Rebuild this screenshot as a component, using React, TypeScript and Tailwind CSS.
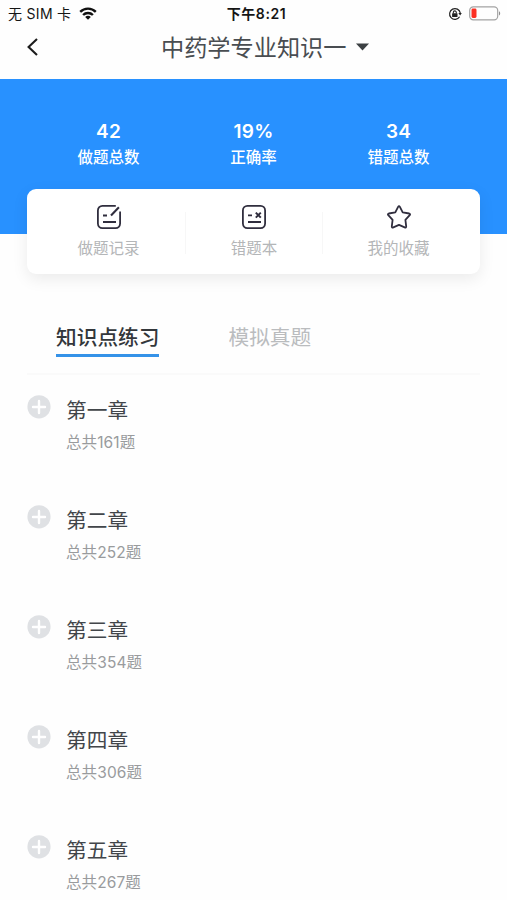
import type { ReactNode } from "react";

const stats = [
  { value: "42", label: "做题总数" },
  { value: "19%", label: "正确率" },
  { value: "34", label: "错题总数" },
];

const chapters = [
  { title: "第一章", total: 161 },
  { title: "第二章", total: 252 },
  { title: "第三章", total: 354 },
  { title: "第四章", total: 306 },
  { title: "第五章", total: 267 },
];

function WifiIcon() {
  return (
    <svg width="18" height="13" viewBox="0 0 18 13" fill="none" stroke="#111" strokeWidth="2.4">
      <path d="M1.2 4.9a11 11 0 0 1 15.6 0" />
      <path d="M4.1 8a6.9 6.9 0 0 1 9.8 0" />
      <path d="M9 12.8 6.2 10a3.9 3.9 0 0 1 5.6 0z" fill="#111" stroke="none" />
    </svg>
  );
}

function RotationLockIcon() {
  return (
    <svg width="14" height="14" viewBox="0 0 14 14" fill="none" stroke="#222">
      <path d="M11.6 9.8A5.4 5.4 0 1 1 12.3 6" strokeWidth="1.2" />
      <path d="M10.4 6h3.4l-1.7 2.4z" fill="#222" stroke="none" />
      <rect x="4.1" y="6.3" width="5.4" height="3.7" rx="0.5" fill="#222" stroke="none" />
      <path d="M5.3 6.5V5.4a1.5 1.5 0 0 1 3 0v1.1" strokeWidth="1.1" />
    </svg>
  );
}

function BatteryIcon() {
  return (
    <svg width="32" height="15" viewBox="0 0 32 15" fill="none">
      <rect x="0.7" y="0.8" width="28" height="13" rx="3.6" stroke="#a3a3a3" strokeWidth="1.2" />
      <rect x="2.5" y="2.6" width="5" height="9.4" rx="1.4" fill="#fb3024" />
      <path d="M30 5.2c1.6.7 1.6 3.6 0 4.3z" fill="#8f8f8f" />
    </svg>
  );
}

function RecordIcon() {
  return (
    <svg width="26" height="26" viewBox="0 0 26 26" fill="none" stroke="#302e3e" strokeWidth="1.8">
      <path d="M19.8 1.9H6.4a4.5 4.5 0 0 0-4.5 4.5v13.2a4.5 4.5 0 0 0 4.5 4.5h13.2a4.5 4.5 0 0 0 4.5-4.5V7.6" />
      <path d="m15 11.4 7.9-8.1" strokeWidth="2.1" />
      <path d="M7 11.5h4M7 18h13" />
    </svg>
  );
}

function MistakeIcon() {
  return (
    <svg width="26" height="26" viewBox="0 0 26 26" fill="none" stroke="#302e3e" strokeWidth="1.8">
      <rect x="1.9" y="1.9" width="22.2" height="22.2" rx="4.5" />
      <path d="M7 11.3h4M7 18h13" />
      <path d="m14.8 8.6 5 5m0-5-5 5" strokeWidth="2" />
    </svg>
  );
}

function StarIcon() {
  return (
    <svg
      width="26"
      height="26"
      viewBox="0 0 26 26"
      fill="none"
      stroke="#302e3e"
      strokeWidth="1.8"
      strokeLinejoin="round"
    >
      <path d="M12.1 2.9q.9-1.5 1.8 0l2.8 5.4 6.5 1.2q1.5.5.5 1.7l-4.3 4.7.8 6.5q0 1.6-1.5 1L13 20.9l-5.7 2.5q-1.5.6-1.5-1l.8-6.5-4.3-4.7q-1-1.2.5-1.7l6.5-1.2z" />
    </svg>
  );
}

function Action({ icon, label, className }: { icon: ReactNode; label: string; className: string }) {
  return (
    <div className={`flex flex-col items-center ${className}`}>
      {icon}
      <span className="mt-2 text-[15.5px] leading-[22px] text-[#b4b6b8]">{label}</span>
    </div>
  );
}

export default function App() {
  return (
    <div className="h-[900px] w-full overflow-hidden bg-[#fefefe] font-['Inter','Noto_Sans_CJK_SC',sans-serif]">
      <div className="grid h-[27px] grid-cols-3 items-center pr-[6px] pl-2 text-[14px] leading-5 text-[#151515]">
        <div className="flex items-center gap-2">
          <span className="tracking-[0.3px] whitespace-pre">无 SIM 卡</span>
          <WifiIcon />
        </div>
        <div className="pl-1 text-center font-semibold tracking-[0.6px]">下午8:21</div>
        <div className="flex items-center justify-end gap-[7px]">
          <RotationLockIcon />
          <BatteryIcon />
        </div>
      </div>

      <div className="flex h-[52px] items-start pt-[5px]">
        <svg className="mt-[5px] ml-[26px]" width="13" height="20" viewBox="0 0 13 20" fill="none">
          <path d="M11 2 2.6 10l8.4 8" stroke="#1c1c1c" strokeWidth="2.1" />
        </svg>
        <div className="ml-[122px] flex items-center text-[23.2px] leading-8 text-[#494d51]">
          中药学专业知识一
          <svg className="-mt-[2px] ml-[9px]" width="13" height="8" viewBox="0 0 13 8">
            <path d="M0 .5h13L6.5 7.5z" fill="#3c4043" />
          </svg>
        </div>
      </div>

      <div className="h-[155px] bg-[#2891ff] px-9 pt-10 text-white">
        <div className="grid grid-cols-3 text-center">
          {stats.map((s) => (
            <div key={s.label}>
              <div className="text-[19px] leading-[26px] font-semibold tracking-[0.2px]">{s.value}</div>
              <div className="text-[15.5px] leading-[25px] font-medium">{s.label}</div>
            </div>
          ))}
        </div>
      </div>

      <div className="relative mx-[27px] -mt-[45px] flex h-[85px] rounded-[9px] bg-white pt-[15px] shadow-[0_5px_16px_rgba(0,0,0,0.08)]">
        <Action icon={<RecordIcon />} label="做题记录" className="w-[158px] pl-[5px]" />
        <div className="mt-2 h-[42px] w-px bg-[#f7f7f7]" />
        <Action icon={<MistakeIcon />} label="错题本" className="w-[136px]" />
        <div className="mt-2 h-[42px] w-px bg-[#f7f7f7]" />
        <Action icon={<StarIcon />} label="我的收藏" className="flex-1 pr-[6px]" />
      </div>

      <div className="mx-[27px] mt-[46px] flex h-[55px] gap-[69px] border-b-2 border-[#fafafa] pl-[29px] text-[20.7px] leading-[36px]">
        <div className="h-[37px] border-b-3 border-[#3592e8] font-medium text-[#33373b]">知识点练习</div>
        <div className="text-[#babcbe]">模拟真题</div>
      </div>

      <div className="mx-[27px]">
        {chapters.map((c) => (
          <div key={c.title} className="flex h-[110px] pt-5">
            <svg width="24" height="24" viewBox="0 0 24 24">
              <circle cx="12" cy="11.8" r="11.6" fill="#dfe1e4" />
              <path d="M12 6v12M6 12h12" stroke="#fff" strokeWidth="2.4" strokeLinecap="round" />
            </svg>
            <div className="ml-[15px]">
              <div className="text-[20.7px] leading-8 text-[#42464a]">{c.title}</div>
              <div className="mt-1 text-[15.5px] leading-6 tracking-[0.1px] text-[#999b9d]">总共{c.total}题</div>
            </div>
          </div>
        ))}
      </div>
    </div>
  );
}
